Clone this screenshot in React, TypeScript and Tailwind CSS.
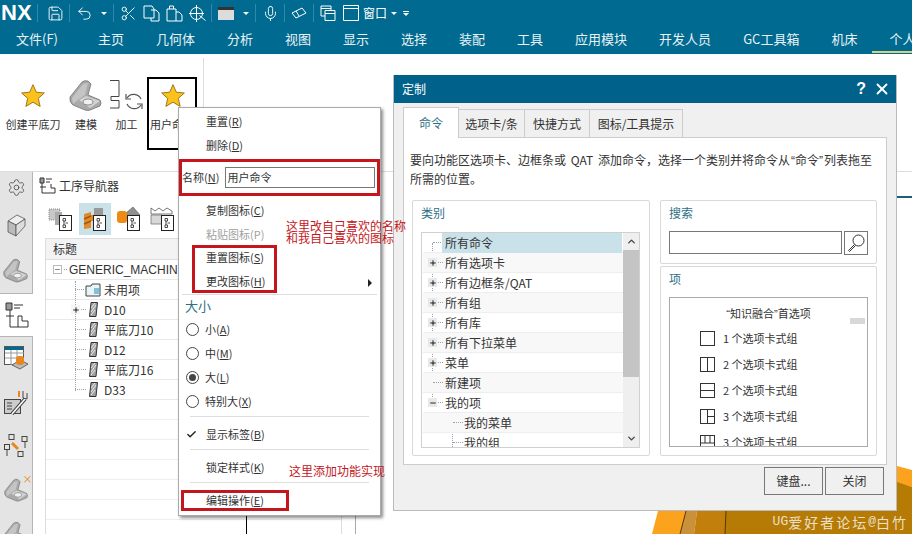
import type { ReactNode } from 'react';
import { Check, ChevronDown, ChevronUp, Mic, Minus, Plus, Save, Scissors, Settings, Undo2, X } from 'lucide-react';

const TABS = ['主页', '几何体', '分析', '视图', '显示', '选择', '装配', '工具', '应用模块', '开发人员', 'GC工具箱', '机床'];
const CATEGORIES: { label: string; mark?: 'plus' | 'minus'; indent?: boolean; selected?: boolean }[] = [
  { label: '所有命令', selected: true },
  { label: '所有选项卡', mark: 'plus' },
  { label: '所有边框条/QAT', mark: 'plus' },
  { label: '所有组', mark: 'plus' },
  { label: '所有库', mark: 'plus' },
  { label: '所有下拉菜单', mark: 'plus' },
  { label: '菜单', mark: 'plus' },
  { label: '新建项' },
  { label: '我的项', mark: 'minus' },
  { label: '我的菜单', indent: true },
  { label: '我的组', indent: true },
];

function Star({ size = 26 }: { size?: number }) {
  return (
    <svg width={size} height={size} viewBox="0 0 24 24">
      <path d="M12 1.5l3.1 7 7.4.7-5.6 5 1.7 7.4L12 17.7l-6.6 3.9 1.7-7.4-5.6-5 7.4-.7z" fill="#fcc21b" stroke="#8a6a14" strokeWidth="0.8" />
    </svg>
  );
}

function Bracket() {
  return (
    <svg width="33" height="32" viewBox="0 0 33 32" fill="none" stroke="#444" strokeWidth="1">
      <path d="M0 .5h9v16H1v4h8v7.5H0" />
      <path d="M17 18a8 8 0 0 1 14 1M31 25a8 8 0 0 1-14-1" stroke="#555" strokeWidth="1.2" />
      <path d="M16 14v5h5M32 29v-5h-5" stroke="#555" strokeWidth="1.2" />
    </svg>
  );
}

function Part({ size = 34 }: { size?: number }) {
  return (
    <svg width={size} height={size} viewBox="0 0 34 34">
      <path d="M1 18L13 3q2-2 6-1l3 3-3 11 12 5q2 3 0 6l-10 4q-2 1-5 0L4 26q-4-3-3-8z" fill="#a9a9a9" stroke="#666" strokeWidth="0.7" />
      <path d="M3 19L14 5l5-1-3 12-6 4-6 5z" fill="#c4c4c4" />
      <path d="M10 21l7-4 14 5-10 7z" fill="#d2d2d2" />
      <ellipse cx="19" cy="23" rx="5" ry="3" fill="#f1f1f1" stroke="#666" strokeWidth="0.7" />
    </svg>
  );
}

function Tool() {
  return (
    <svg width="9" height="15" viewBox="0 0 9 15">
      <path d="M2 .5h6.5L7 14.5H.5z" fill="#a0a0a0" stroke="#333" />
      <path d="M2 10l5-7M2 6l4-5M2 13l4-5" stroke="#eee" />
    </svg>
  );
}

function TreeDoc() {
  return (
    <g>
      <rect x="11.5" y="9.500" width="12" height="15" fill="#fff" stroke="#222" />
      <path d="M15 12.500h2.500v2.500H15zM15 19h2.500v2.500H15zM16 15v4M17.500 17h2.500" fill="none" stroke="#222" strokeWidth="0.8" />
    </g>
  );
}

function NavIcon({ active, children }: { active?: boolean; children: ReactNode }) {
  return (
    <div className={`flex h-8 w-8 shrink-0 items-center justify-center ${active ? 'bg-[#c9e2ea]' : ''}`}>
      <svg width="26" height="26" viewBox="0 0 26 26">
        {children}
        <TreeDoc />
      </svg>
    </div>
  );
}

function RailIcon({ children, active, height }: { children: ReactNode; active?: boolean; height: string }) {
  return (
    <div className={`flex w-[33px] items-center justify-center ${height} ${active ? 'border-y border-[#b5b5b5] bg-white' : 'border-r border-[#b5b5b5]'}`}>
      {children}
    </div>
  );
}

function Row({ children, mark }: { children: ReactNode; mark?: boolean }) {
  return (
    <div className="relative flex h-5 items-center border-b border-[#e8e8e8] pl-[43px]">
      <span className="absolute left-[29px] top-[9px] w-[11px] border-t border-dotted border-gray-400" />
      {mark && (
        <span className="absolute left-[25px] top-[5px] flex h-[9px] w-[9px] items-center justify-center bg-[#f5f5f5]">
          <Plus size={8} strokeWidth={2.5} className="text-black" />
        </span>
      )}
      {children}
    </div>
  );
}

function MenuItem({ children, muted }: { children: ReactNode; muted?: boolean }) {
  return <div className={`flex h-6 items-center pl-[27px] text-[11px] ${muted ? 'text-[#a0a0a0]' : 'text-[#333]'}`}>{children}</div>;
}

function Radio({ label, on }: { label: ReactNode; on?: boolean }) {
  return (
    <div className="flex h-6 items-center gap-[6px] pl-[7px] text-[11px] text-[#333]">
      <span className="flex h-[13px] w-[13px] items-center justify-center rounded-full border border-[#444]">
        {on && <span className="h-[7px] w-[7px] rounded-full bg-[#444]" />}
      </span>
      {label}
    </div>
  );
}

function ContextMenu() {
  return (
    <div className="absolute left-[178px] top-[107px] h-[409px] w-[203px] border border-[#aaa] bg-white pt-[1px] shadow-[2px_2px_3px_rgba(0,0,0,0.45)]">
      <MenuItem>重置(<u>R</u>)</MenuItem>
      <MenuItem>删除(<u>D</u>)</MenuItem>
      <div className="mt-[2px] flex h-[37px] items-center gap-[6px] border-[3px] border-[#c4161c] pr-[2px] text-[11px] text-[#333]">
        <span className="shrink-0">名称(<u>N</u>)</span>
        <div className="flex h-[21px] flex-1 items-center border border-[#777] pl-[1px]">用户命令</div>
      </div>
      <div className="mt-[2px]">
        <MenuItem>复制图标(<u>C</u>)</MenuItem>
        <MenuItem muted>粘贴图标(P)</MenuItem>
      </div>
      <div className="ml-[13px] mt-[-1px] flex h-[48px] w-[85px] flex-col gap-[6px] border-[3px] border-[#c4161c] text-[11px] text-[#333]">
        <div className="flex h-[18px] items-center whitespace-nowrap pl-[11px]">重置图标(<u>S</u>)</div>
        <div className="flex h-[18px] items-center whitespace-nowrap pl-[11px]">更改图标(<u>H</u>)</div>
      </div>
      <div className="mx-[3px] mt-[1px] border-t border-[#ddd] pl-[3px] text-[13px] leading-[22px] text-[#2f6f86]">大小</div>
      <Radio label={<span>小(<u>A</u>)</span>} />
      <Radio label={<span>中(<u>M</u>)</span>} />
      <Radio on label={<span>大(<u>L</u>)</span>} />
      <Radio label={<span>特别大(<u>X</u>)</span>} />
      <div className="mx-[11px] mb-[5px] mt-[3px] border-t border-[#ddd]" />
      <div className="flex h-6 items-center pl-[7px] text-[11px] text-[#333]">
        <Check size={11} strokeWidth={3} className="mr-[9px] text-[#222]" />
        显示标签(<u>B</u>)
      </div>
      <div className="mx-[11px] mb-[5px] mt-[3px] border-t border-[#ddd]" />
      <MenuItem>锁定样式(<u>K</u>)</MenuItem>
      <div className="mx-[11px] mb-[7px] mt-[3px] border-t border-[#ddd]" />
      <div className="ml-[2px] flex h-[21px] w-[108px] items-center border-[3px] border-[#c4161c] pl-[22px] text-[11px] text-[#333]">
        <span className="whitespace-nowrap">编辑操作(<u>E</u>)</span>
      </div>
      <span className="absolute right-[8px] top-[171px] h-0 w-0 border-y-[4px] border-l-[4px] border-y-transparent border-l-[#222]" />
    </div>
  );
}

function Annotation({ className, children }: { className: string; children: ReactNode }) {
  return <div className={`absolute whitespace-nowrap text-[12px] leading-[12px] text-[#c4161c] ${className}`}>{children}</div>;
}

function Panel({ title, className, children }: { title: string; className: string; children: ReactNode }) {
  return (
    <div className={`rounded-[2px] border border-[#d9d9d9] bg-white pl-[8px] pt-[3px] ${className}`}>
      <div className="text-[12px] leading-[18px] text-[#2f6f86]">{title}</div>
      {children}
    </div>
  );
}

function CategoryTree() {
  return (
    <div className="mt-[10px] flex h-[216px] border border-[#d0d0d0] pl-[1px] text-[12px] text-[#333]">
      <div className="relative flex-1 overflow-hidden">
        <span className="absolute left-[9px] top-[10px] h-[160px] border-l border-dotted border-gray-400" />
        <span className="absolute left-[29px] top-[180px] h-[40px] border-l border-dotted border-gray-400" />
        {CATEGORIES.map((c, i) => (
          <div key={c.label} className={`relative flex h-5 items-center border-b border-[#eee] ${i % 2 === 1 ? 'bg-[#f8f8f8]' : ''} ${c.indent ? 'pl-[41px]' : 'pl-[22px]'}`}>
            <span className={`absolute top-[9px] w-[10px] border-t border-dotted border-gray-400 ${c.indent ? 'left-[30px]' : 'left-[10px]'}`} />
            {c.mark && (
              <span className="absolute left-[5px] top-[5px] flex h-[9px] w-[9px] items-center justify-center bg-[#e8e8e8]">
                {c.mark === 'plus' ? <Plus size={8} strokeWidth={2.5} className="text-black" /> : <Minus size={8} strokeWidth={2.5} className="text-black" />}
              </span>
            )}
            <span className={`relative flex h-5 items-center whitespace-nowrap ${c.selected ? '-ml-[3px] w-[180px] bg-[#c9e2ea] pl-[3px]' : ''}`}>{c.label}</span>
          </div>
        ))}
      </div>
      <div className="flex w-[16px] flex-col bg-[#efefef]">
        <div className="flex h-[17px] items-center justify-center"><ChevronUp size={11} strokeWidth={3} className="text-[#444]" /></div>
        <div className="h-[127px] bg-[#c4c4c4]" />
        <div className="flex-1" />
        <div className="flex h-[17px] items-center justify-center"><ChevronDown size={11} strokeWidth={3} className="text-[#444]" /></div>
      </div>
    </div>
  );
}

function Layout({ label, kind }: { label: string; kind: number }) {
  return (
    <div className="flex h-[26px] items-center gap-[8px] pl-[30px] text-[11px] text-[#333]">
      <svg className="shrink-0" width="15" height="15" viewBox="0 0 15 15" fill="none" stroke="#333">
        <rect x="0.5" y="0.5" width="14" height="14" />
        {kind === 2 && <path d="M7.5 0v15" />}
        {kind === 3 && <path d="M0 7.5h15" />}
        {kind === 4 && <path d="M7.5 0v15M7.5 7.5h7" />}
        {kind === 5 && <path d="M5 0v8M10 0v8M0 8h15" />}
      </svg>
      {label}
    </div>
  );
}

function Quote({ children }: { children: ReactNode }) {
  return <span className="font-['Liberation_Sans',sans-serif]">{children}</span>;
}

function CustomizeDialog() {
  return (
    <div className="absolute left-[393px] top-[75px] flex h-[436px] w-[504px] flex-col border-x border-b border-[#bbb] bg-[#f0f0f0]">
      <div className="flex h-[28px] shrink-0 items-center justify-between bg-[#00618a] pl-[8px] pr-[5px] text-[12px] text-white">
        定制
        <div className="flex items-center gap-[7px]">
          <span className="font-['Liberation_Sans',sans-serif] text-[16px] font-bold">?</span>
          <X size={18} strokeWidth={2.5} />
        </div>
      </div>
      <div className="flex h-[34px] shrink-0 items-end pl-[9px] text-[12px] text-[#333]">
        <div className="relative z-10 -mb-px flex h-[31px] w-[56px] items-center justify-center border border-b-0 border-[#ccc] bg-white text-[#2f6f86]">命令</div>
        <div className="flex h-[28px] w-[66px] items-center justify-center border-t border-r border-[#ccc]">选项卡/条</div>
        <div className="flex h-[28px] w-[65px] items-center justify-center border-t border-r border-[#ccc]">快捷方式</div>
        <div className="flex h-[28px] w-[93px] items-center justify-center border-t border-r border-[#ccc]">图标/工具提示</div>
      </div>
      <div className="mx-[9px] h-[328px] shrink-0 border border-[#ccc] bg-white pl-[6px] pt-[13px]">
        <p className="w-[466px] text-[12px] leading-[18px] text-[#333]">要向功能区选项卡、边框条或<span className="mx-[2px]"> QAT </span>添加命令，选择一个类别并将命令从<span className="mx-[1px]"><Quote>“</Quote>命令<Quote>”</Quote></span>列表拖至所需的位置。</p>
        <div className="ml-[2px] mt-[12px] flex gap-[10px]">
          <Panel title="类别" className="h-[256px] w-[238px] pr-[9px]">
            <CategoryTree />
          </Panel>
          <div className="flex w-[217px] flex-col gap-[2px]">
            <Panel title="搜索" className="h-[64px] pr-[8px]">
              <div className="mt-[9px] flex gap-[2px]">
                <div className="h-[23px] flex-1 border border-[#777]" />
                <div className="flex h-[24px] w-[24px] items-center justify-center border border-[#777]">
                  <svg width="18" height="18" viewBox="0 0 18 18" fill="none" stroke="#333">
                    <circle cx="11.5" cy="6.500" r="5.500" />
                    <path d="M7.500 10.500L1.500 16.500l1 1 6-6" />
                  </svg>
                </div>
              </div>
            </Panel>
            <Panel title="项" className="h-[190px] pr-[8px]">
              <div className="relative mt-[9px] h-[150px] overflow-hidden border border-[#aaa]">
                <div className="pt-[6px] text-center text-[11px] leading-[18px] text-[#333]"><Quote>“</Quote>知识融合<Quote>”</Quote>首选项</div>
                <span className="absolute right-[2px] top-[20px] h-[6px] w-[15px] bg-[#d8d8d8]" />
                <div className="mt-[2px]">
                  <Layout label="1 个选项卡式组" kind={1} />
                  <Layout label="2 个选项卡式组" kind={2} />
                  <Layout label="2 个选项卡式组" kind={3} />
                  <Layout label="3 个选项卡式组" kind={4} />
                  <Layout label="3 个选项卡式组" kind={5} />
                </div>
              </div>
            </Panel>
          </div>
        </div>
      </div>
      <div className="mr-[12px] mt-[2px] flex justify-end gap-[2px] text-[12px] text-[#333]">
        <div className="flex h-[28px] w-[59px] items-center justify-center border border-[#777]">键盘...</div>
        <div className="flex h-[28px] w-[59px] items-center justify-center border border-[#777]">关闭</div>
      </div>
    </div>
  );
}

function QatDivider({ className }: { className: string }) {
  return <span className={`h-[18px] w-px shrink-0 bg-[#2f89a8] ${className}`} />;
}

function Caret({ className }: { className: string }) {
  return <span className={`h-0 w-0 shrink-0 border-x-[3px] border-t-[3px] border-x-transparent border-t-white ${className}`} />;
}

function Canvas() {
  return (
    <>
      <span className="absolute left-[897px] top-[196px] h-[2px] w-[15px] bg-[#1e5f78]" />
      <svg className="absolute left-[640px] top-[460px]" width="272" height="74" viewBox="0 0 272 74">
        <path d="M12 74l6-23h28l-6 23z" fill="#fba31c" />
        <path d="M40 74l6-23h11l-3 23z" fill="#c8913a" />
        <path d="M54 74l3-23h30v23z" fill="#c27f0c" />
        <path d="M85 74l1-23h186v23z" fill="#b67b05" />
        <path d="M85 74l1-23" stroke="#54390a" />
        <path d="M40 74l6-23" stroke="#54390a" />
        <path d="M257 6l15 4v17l-15-4z" fill="#fba31c" />
        <path d="M257 22l15 5v47h-15z" fill="#b67b05" />
      </svg>
    </>
  );
}

export default function App() {
  return (
    <div className="relative h-[534px] w-[912px] overflow-hidden bg-white font-['Noto_Sans_CJK_SC','Liberation_Sans',sans-serif]">
      <header className="h-[54px] bg-[#006a90] text-white">
        <div className="flex h-[26px] items-center text-white">
          <span className="ml-[1px] w-[31px] font-['Liberation_Sans',sans-serif] text-[22px] font-bold leading-none">NX</span>
          <QatDivider className="ml-[5px]" />
          <Save size={17} strokeWidth={1.3} className="ml-[9px]" />
          <QatDivider className="ml-[5px]" />
          <Undo2 size={17} strokeWidth={1.3} className="ml-[6px]" />
          <Caret className="ml-[8px]" />
          <QatDivider className="ml-[6px]" />
          <Scissors size={17} strokeWidth={1.3} className="ml-[6px]" />
          <svg className="ml-[6px]" width="17" height="17" viewBox="0 0 17 17" fill="none" stroke="currentColor"><path d="M1 1h8l2 3v9H1zM8 5h5l3 3v8H8v-3" /></svg>
          <svg className="ml-[6px]" width="17" height="17" viewBox="0 0 17 17" fill="none" stroke="currentColor"><path d="M1 4h9v12H1zM3.5 4V1h4v3M10 7h3l3 3v6h-6" /></svg>
          <svg className="ml-[6px]" width="17" height="17" viewBox="0 0 17 17" fill="none" stroke="currentColor"><circle cx="7.5" cy="8.5" r="6" /><path d="M7.5 0v17M0 8.5h15M10.5 10.5l6 5" /></svg>
          <QatDivider className="ml-[5px]" />
          <svg className="ml-[6px]" width="16" height="13" viewBox="0 0 16 13"><rect width="16" height="13" fill="#dcdcdc" /><rect width="16" height="3" fill="#333" /></svg>
          <Caret className="ml-[9px]" />
          <QatDivider className="ml-[6px]" />
          <Mic size={17} strokeWidth={1.3} className="ml-[6px]" />
          <QatDivider className="ml-[5px]" />
          <svg className="ml-[6px]" width="16" height="12" viewBox="0 0 16 12" fill="none" stroke="currentColor"><path d="M1 6l10-5 4 5-10 5zM5 4l3 5" /></svg>
          <QatDivider className="ml-[6px]" />
          <svg className="ml-[6px]" width="16" height="16" viewBox="0 0 16 16" fill="none" stroke="currentColor"><path d="M1 1h10v4M1 1v10h4M1 3.5h10M5 5.500h10v10H5zM5 8.500h10" /></svg>
          <svg className="ml-[7px]" width="16" height="16" viewBox="0 0 16 16" fill="none" stroke="currentColor"><path d="M.5.500h15v15H.5zM.5 3.500h15" /></svg>
          <span className="ml-[4px] text-[12px] leading-none">窗口</span>
          <Caret className="ml-[4px]" />
          <div className="ml-[6px] flex flex-col gap-[1px]">
            <span className="h-px w-[6px] bg-white" />
            <Caret className="" />
          </div>
        </div>
        <nav className="flex h-[28px] items-center gap-8 whitespace-nowrap pb-[2px] pl-[16px] text-[13px] text-[#e8f2f6]">
          <span className="mr-[8px]">文件(F)</span>
          {TABS.map(t => <span key={t}>{t}</span>)}
          <span className="-ml-[17px] flex h-[28px] w-[60px] items-center border-b-2 border-[#d9d27a] pl-[17px] pt-[1px]">个人</span>
        </nav>
      </header>

      <section className="flex h-[118px] items-start border-b border-[#ddd] pl-[6px] pt-[23px] text-[11px] leading-[16px] text-[#333]">
        <div className="flex w-[54px] flex-col items-center">
          <div className="mt-[6px]"><Star /></div>
          <span className="mt-[7px] whitespace-nowrap">创建平底刀</span>
        </div>
        <div className="ml-[6px] flex w-[40px] flex-col items-center">
          <div className="mt-[2px]"><Part /></div>
          <span className="mt-[3px]">建模</span>
        </div>
        <div className="ml-[4px] flex w-[33px] flex-col items-center">
          <div className="mt-[3px]"><Bracket /></div>
          <span className="mt-[4px]">加工</span>
        </div>
        <div className="ml-[4px] h-[73px] w-[50px] overflow-hidden whitespace-nowrap border-2 border-black pl-[1px] pt-[4px]">
          <div className="flex justify-center"><Star /></div>
          <div className="mt-[7px]">用户命令</div>
        </div>
        <span className="-mt-[19px] ml-[6px] h-[113px] w-px bg-[#ddd]" />
      </section>

      <div className="flex h-[362px]">
        <aside className="flex w-[33px] shrink-0 flex-col bg-[#e4e4e4]">
          <RailIcon height="h-[30px]"><Settings size={19} strokeWidth={1} className="text-[#444]" /></RailIcon>
          <RailIcon height="h-[46px]">
            <svg width="22" height="26" viewBox="0 0 22 26" stroke="#555" strokeWidth="0.8"><path d="M3 9l9-6 8 4-9 6z" fill="#eee" /><path d="M3 9l8 4v11l-8-4z" fill="#bbb" /><path d="M11 13l9-6v7l-9 10z" fill="#ddd" /></svg>
          </RailIcon>
          <RailIcon height="h-[45px]"><Part size={26} /></RailIcon>
          <RailIcon active height="h-[44px]">
            <svg width="24" height="26" viewBox="0 0 24 26" fill="none" stroke="#333"><path d="M1 1h6v7H1z" fill="#999" /><path d="M9 3h9M9 6h6M1 14h8M5 8v17M5 25h18M13 14h4v5h6v6M13 14v11" /></svg>
          </RailIcon>
          <RailIcon height="h-[42px]">
            <svg width="25" height="25" viewBox="0 0 25 25"><rect x=".5" y=".5" width="19" height="18" fill="#fff" stroke="#555" /><path d="M1 7h19M1 12h19M7 1v18M13 1v18" stroke="#999" /><rect x="1" y="1" width="18" height="3" fill="#006a90" /><path d="M8 19l8-5 8 4-8 5z" fill="#bbb" stroke="#666" /><rect x="12" y="10" width="8" height="9" rx="3" fill="#e8871e" /></svg>
          </RailIcon>
          <RailIcon height="h-[46px]">
            <svg width="25" height="25" viewBox="0 0 25 25"><rect x=".5" y="9.500" width="16" height="14" fill="#ccc" stroke="#444" /><path d="M3 13h5M3 16h5M3 19h5" stroke="#444" /><path d="M8 24L21 9" stroke="#444" strokeWidth="3.500" /><path d="M8 24L21 9" stroke="#fff" strokeWidth="1.500" /><path d="M15 1v6" stroke="#e8871e" strokeWidth="2" /><path d="M19 1v7l4 1V3" fill="none" stroke="#444" /></svg>
          </RailIcon>
          <RailIcon height="h-[42px]">
            <svg width="24" height="24" viewBox="0 0 24 24" fill="none" stroke="#444"><rect x="5" y=".5" width="5" height="5" /><rect x=".5" y="10.500" width="5" height="5" /><rect x="18" y="2.500" width="5" height="5" /><rect x="14" y="17.500" width="5" height="5" /><path d="M8 9l6 6" stroke="#e8871e" strokeWidth="3" /><path d="M3 16v6M21 8v6" /></svg>
          </RailIcon>
          <RailIcon height="h-[46px]">
            <div className="relative"><Part size={25} /><span className="absolute -right-[4px] -top-[4px] text-[10px] leading-none text-[#e8871e]">×</span></div>
          </RailIcon>
          <RailIcon height="h-[21px]"><div className="h-[21px] overflow-hidden pt-[8px]"><Part size={25} /></div></RailIcon>
        </aside>

        <main className="flex w-[323px] shrink-0 flex-col border-r border-[#aaa] pl-[6px] pr-[13px] text-[12px] text-[#333]">
          <div className="flex h-[25px] shrink-0 items-center gap-[3px] pt-[2px]">
            <svg width="17" height="17" viewBox="0 0 17 17" fill="none" stroke="#333"><path d="M1 1h4v5H1z" fill="#999" /><path d="M7 2h6M7 5h4M1 10h6M3 6v10h13v-5h-4v-4" /></svg>
            工序导航器
          </div>
          <div className="mt-[6px] flex h-[32px] shrink-0 items-center gap-[2px] pl-[6px]">
            <NavIcon>
              <rect x="1" y="3" width="11" height="11" fill="#c8c8c8" stroke="#888" strokeDasharray="1 1" />
              <rect x="7" y="6" width="7" height="13" fill="#aaa" />
            </NavIcon>
            <NavIcon active>
              <rect x="12" y="2" width="9" height="8" fill="#999" />
              <path d="M2 8l7-2v16l-7 1z" fill="#e58a2a" />
              <path d="M2 13l7-3M2 18l7-3" stroke="#9a5a10" strokeWidth="1.500" />
              <rect x="9" y="9" width="4" height="6" fill="#e8871e" />
            </NavIcon>
            <NavIcon>
              <path d="M10 7l7-6 7 8-12 8z" fill="#8f8f8f" stroke="#555" strokeWidth=".6" />
              <rect x="1" y="5" width="10" height="12" rx="3" fill="#ef8a14" />
            </NavIcon>
            <NavIcon>
              <path d="M1 8V2l4 3 4-3 4 3 4-3 5 3v3z" fill="#fff" stroke="#555" strokeWidth=".8" />
              <path d="M1 9h11v9H1z" fill="#d8d8d8" stroke="#777" strokeWidth=".8" />
            </NavIcon>
          </div>
          <div className="relative ml-[6px] mt-[3px] flex flex-1 flex-col border-x border-[#ddd]">
            <span className="absolute left-[29px] top-[43px] h-[110px] border-l border-dotted border-gray-400" />
            <div className="flex h-[22px] shrink-0 items-center border-y border-[#ddd] bg-[#f3f3f3] pl-[7px]">标题</div>
            <div className="flex h-5 shrink-0 items-center gap-[2px] border-b border-[#e8e8e8] pl-[7px] font-['Liberation_Sans','Noto_Sans_CJK_SC',sans-serif]">
              <span className="flex h-[9px] w-[9px] items-center justify-center border border-[#bbb]"><Minus size={7} strokeWidth={2} /></span>
              <span className="w-[3px] border-t border-dotted border-gray-400" />
              <span className="whitespace-nowrap">GENERIC_MACHINE</span>
            </div>
            <Row>
              <svg className="mr-[3px] -ml-[4px]" width="16" height="14" viewBox="0 0 16 14"><path d="M1 3h5l1-2h8v12H1z" fill="#e8f4f8" stroke="#444" /><path d="M9 6h5M9 8h5M9 10h5" stroke="#1a8fb8" /></svg>
              未用项
            </Row>
            <Row mark><Tool /><span className="ml-[6px]">D10</span></Row>
            <Row><Tool /><span className="ml-[6px]">平底刀10</span></Row>
            <Row><Tool /><span className="ml-[6px]">D12</span></Row>
            <Row><Tool /><span className="ml-[6px]">平底刀16</span></Row>
            <Row><Tool /><span className="ml-[6px]">D33</span></Row>
            {[0, 1, 2, 3, 4, 5, 6].map(i => <div key={i} className="h-5 shrink-0 border-b border-[#eee]" />)}
            <div className="flex-1 bg-[#f5f5f5]" />
          </div>
        </main>
      </div>

      <span className="absolute left-[246px] top-[516px] h-[18px] w-px bg-black" />
      <Canvas />
      <ContextMenu />
      <CustomizeDialog />
      <Annotation className="left-[286px] top-[220px]">这里改自己喜欢的名称<br />和我自己喜欢的图标</Annotation>
      <Annotation className="left-[289px] top-[465px]">这里添加功能实现</Annotation>
      <div className="absolute right-[4px] top-[513px] flex items-center whitespace-nowrap text-[14px] leading-[18px] tracking-[2px] text-[#eadfc8]">
        <span className="font-['Liberation_Mono',monospace] text-[13px] tracking-normal">UG</span>
        爱好者论坛
        <span className="font-['Liberation_Mono',monospace] text-[13px] tracking-normal">@</span>
        白竹
      </div>
    </div>
  );
}
